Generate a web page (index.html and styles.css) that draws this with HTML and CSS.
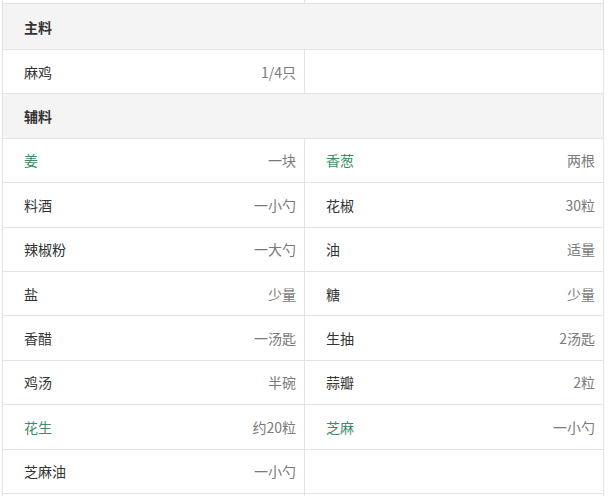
FILE: index.html
```html
<!DOCTYPE html>
<html lang="zh">
<head>
<meta charset="utf-8">
<link rel="stylesheet" href="styles.css">
</head>
<body>
<div class="table">
  <div class="row pair stub"><div class="cell"></div><div class="cell"></div></div>
  <div class="row head first">主料</div>
  <div class="row pair">
    <div class="cell"><span class="name">麻鸡</span><span class="amt">1/4只</span></div>
    <div class="cell"></div>
  </div>
  <div class="row head">辅料</div>
  <div class="row pair">
    <div class="cell"><span class="name green">姜</span><span class="amt">一块</span></div>
    <div class="cell"><span class="name green">香葱</span><span class="amt">两根</span></div>
  </div>
  <div class="row pair">
    <div class="cell"><span class="name">料酒</span><span class="amt">一小勺</span></div>
    <div class="cell"><span class="name">花椒</span><span class="amt">30粒</span></div>
  </div>
  <div class="row pair">
    <div class="cell"><span class="name">辣椒粉</span><span class="amt">一大勺</span></div>
    <div class="cell"><span class="name">油</span><span class="amt">适量</span></div>
  </div>
  <div class="row pair">
    <div class="cell"><span class="name">盐</span><span class="amt">少量</span></div>
    <div class="cell"><span class="name">糖</span><span class="amt">少量</span></div>
  </div>
  <div class="row pair">
    <div class="cell"><span class="name">香醋</span><span class="amt">一汤匙</span></div>
    <div class="cell"><span class="name">生抽</span><span class="amt">2汤匙</span></div>
  </div>
  <div class="row pair">
    <div class="cell"><span class="name">鸡汤</span><span class="amt">半碗</span></div>
    <div class="cell"><span class="name">蒜瓣</span><span class="amt">2粒</span></div>
  </div>
  <div class="row pair">
    <div class="cell"><span class="name green">花生</span><span class="amt">约20粒</span></div>
    <div class="cell"><span class="name green">芝麻</span><span class="amt">一小勺</span></div>
  </div>
  <div class="row pair">
    <div class="cell"><span class="name">芝麻油</span><span class="amt">一小勺</span></div>
    <div class="cell"></div>
  </div>
  <div class="row pair stub"><div class="cell"></div><div class="cell"></div></div>
</div>
</body>
</html>
```

FILE: styles.css
```css
html, body {
  margin: 0;
  padding: 0;
  background: #ffffff;
  overflow: hidden;
}
body {
  font-family: "Noto Sans CJK SC", "Noto Sans", "Liberation Sans", sans-serif;
  font-size: 14px;
  color: #333333;
}
.table {
  margin-left: 2px;
  width: 602px;
  border-left: 1px solid #e3e3e3;
  border-right: 1px solid #e3e3e3;
  box-sizing: border-box;
}
.row {
  box-sizing: border-box;
  height: 44.4px;
  border-bottom: 1px solid #e3e3e3;
}
.stub {
  height: 4px;
}
.head {
  background: #f4f4f4;
  font-weight: bold;
  display: flex;
  align-items: center;
  padding-left: 21px;
}
.head.first {
  height: 46px;
}
.pair {
  display: grid;
  grid-template-columns: 302px 1fr;
}
.cell {
  display: flex;
  align-items: center;
  justify-content: space-between;
  padding: 0 8px 0 21px;
}
.cell:first-child {
  border-right: 1px solid #e3e3e3;
}
.name {
  color: #333333;
}
.name.green {
  color: #3d8c67;
}
.amt {
  color: #7a7a7a;
}
```
